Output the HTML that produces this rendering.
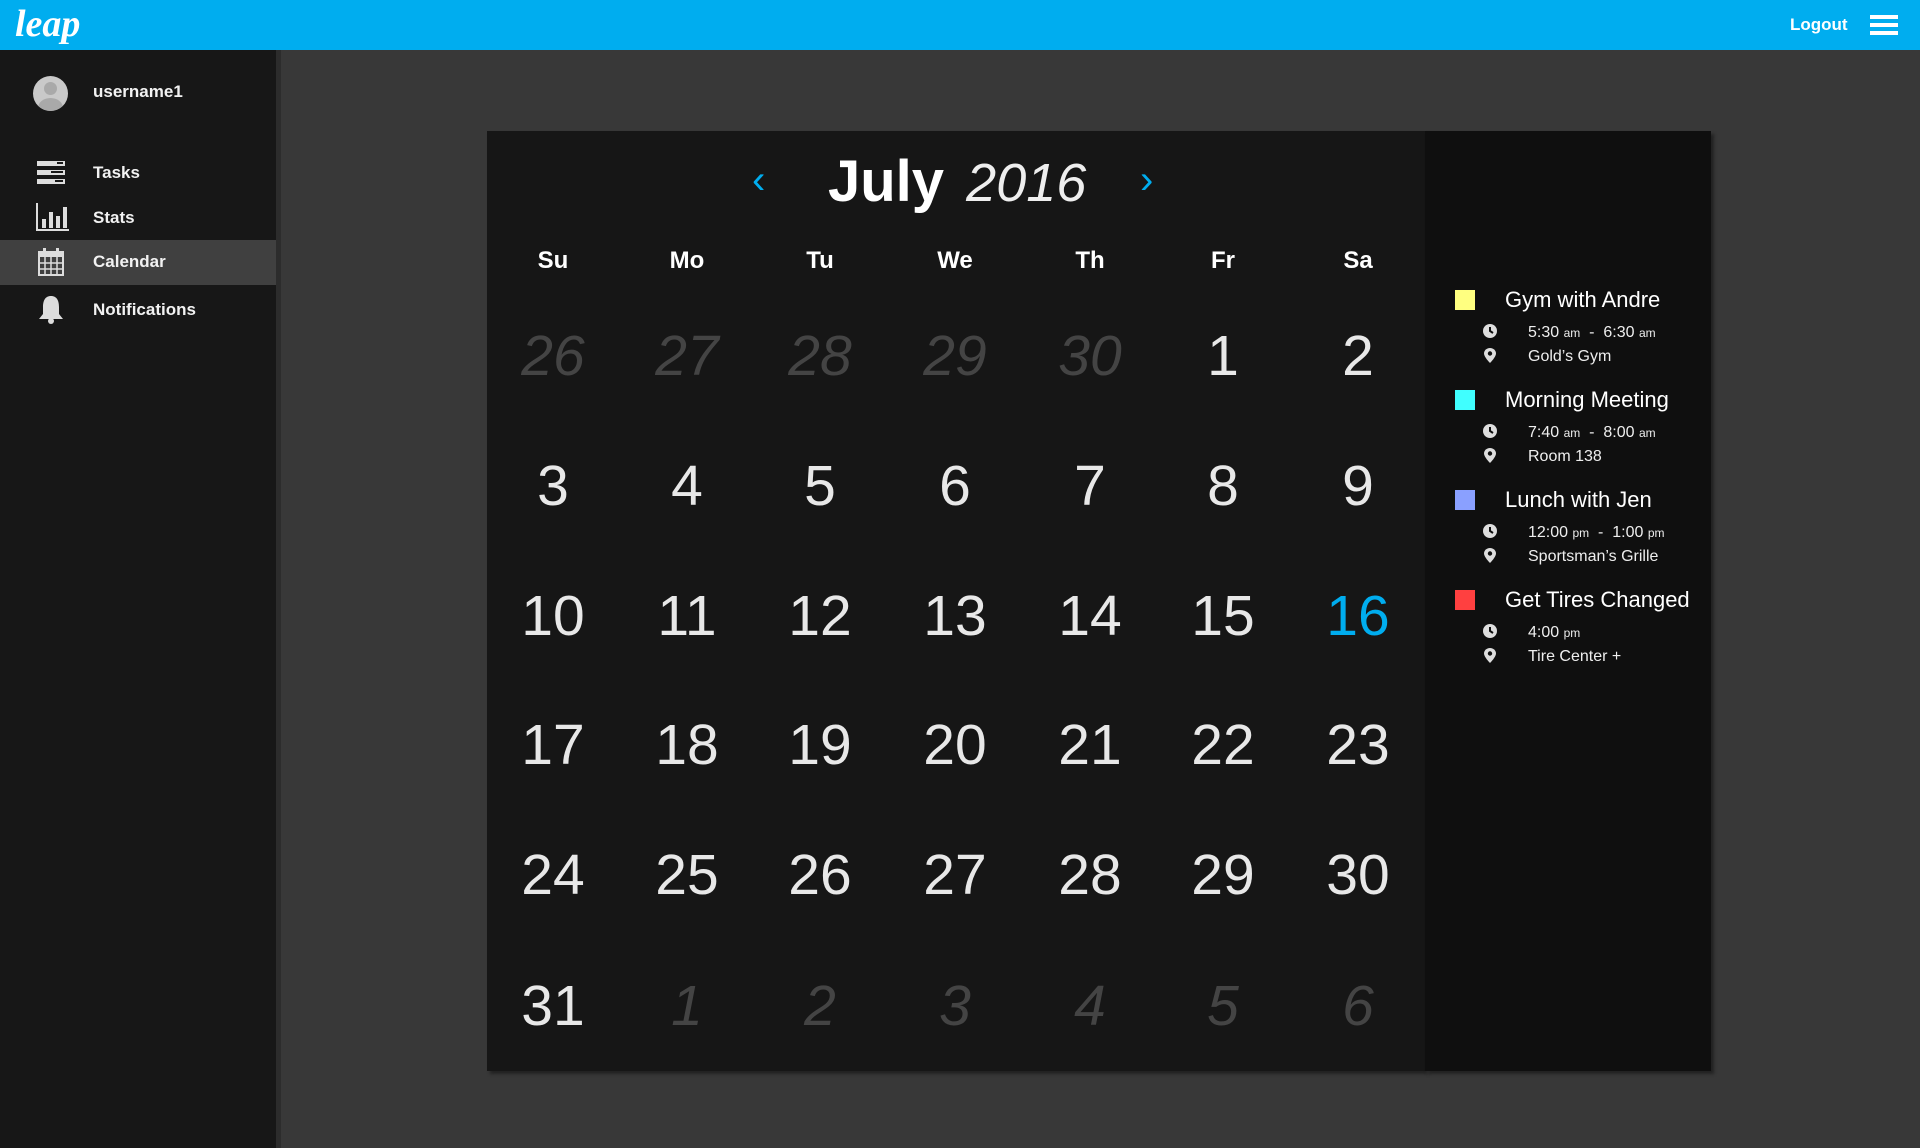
<!DOCTYPE html>
<html><head><style>
*{margin:0;padding:0;box-sizing:border-box}
body{width:1920px;height:1148px;background:#383838;font-family:"Liberation Sans",sans-serif;color:#fff;position:relative;overflow:hidden}
.hdr{position:absolute;left:0;top:0;width:1920px;height:50px;background:#00adef}
.logo{position:absolute;left:15px;top:2px;font-family:"Liberation Serif",serif;font-style:italic;font-weight:bold;font-size:38px;color:#fff}
.logout{position:absolute;left:1790px;top:15px;font-size:17px;font-weight:bold}
.burger{position:absolute;left:1870px;top:15px;width:28px}
.burger div{height:4px;background:#fff;margin-bottom:4px}
.side{position:absolute;left:0;top:50px;width:276px;height:1098px;background:#171717}
.strip{position:absolute;left:276px;top:50px;width:5px;height:1098px;background:#2c2c2c}
.av{position:absolute;left:33px;top:76px;width:35px;height:35px;border-radius:50%;background:#c9c9c9;overflow:hidden}
.av:before{content:"";position:absolute;left:11px;top:6px;width:13px;height:13px;border-radius:50%;background:#a9a9a9}
.av:after{content:"";position:absolute;left:5px;top:22px;width:25px;height:20px;border-radius:50%;background:#a9a9a9}
.nav{position:absolute;left:93px;font-size:17px;font-weight:bold;color:#f2f2f2}
.sel{position:absolute;left:0;top:240px;width:276px;height:45px;background:#404040}
.cal{position:absolute;left:487px;top:131px;width:938px;height:940px;background:#161616;box-shadow:3px 3px 3px #222}
.ev{position:absolute;left:1425px;top:131px;width:286px;height:940px;background:#0f0f0f;box-shadow:3px 3px 3px #222}
.t{position:absolute;text-align:center;width:120px;margin-left:-60px}
.dh{font-size:24px;font-weight:bold;top:247px}
.n{font-size:57px;color:#e8e8e8;line-height:1}
.g{color:#444;font-style:italic}
.sq{position:absolute;left:1455px;width:20px;height:20px}
.et{position:absolute;left:1505px;font-size:22px;color:#fff}
.ei{position:absolute;left:1528px;font-size:16px;color:#eee}
.ei small{font-size:12px}
.ic{position:absolute;left:1483px}
</style></head><body>
<div class="hdr"><div class="logo">leap</div><div class="logout">Logout</div><div class="burger"><div></div><div></div><div></div></div></div>
<div class="side"></div><div class="strip"></div>
<div class="av"></div>
<div class="nav" style="top:82px">username1</div>
<div class="sel"></div>
<svg style="position:absolute;left:37px;top:161px" width="28" height="23"><rect x="0" y="0" width="28" height="5" fill="#ddd"/><rect x="0" y="9" width="28" height="5" fill="#ddd"/><rect x="0" y="18" width="28" height="5" fill="#ddd"/><rect x="20" y="1" width="6" height="2" fill="#171717"/><rect x="14" y="10" width="12" height="2" fill="#171717"/><rect x="18" y="19" width="8" height="2" fill="#171717"/></svg>
<div class="nav" style="top:163px">Tasks</div>
<svg style="position:absolute;left:36px;top:203px" width="33" height="28"><path d="M1 0V27H33" stroke="#ddd" stroke-width="2" fill="none"/><rect x="6" y="16" width="4" height="9" fill="#ddd"/><rect x="13" y="9" width="4" height="16" fill="#ddd"/><rect x="20" y="13" width="4" height="12" fill="#ddd"/><rect x="27" y="4" width="4" height="21" fill="#ddd"/></svg>
<div class="nav" style="top:208px">Stats</div>
<svg style="position:absolute;left:38px;top:248px" width="26" height="28"><rect x="1" y="4" width="24" height="23" fill="none" stroke="#ddd" stroke-width="2"/><rect x="1" y="4" width="24" height="5" fill="#ddd"/><path d="M7 9V27M13 9V27M19 9V27M1 15H25M1 21H25" stroke="#ddd" stroke-width="1.5"/><rect x="5" y="0" width="3" height="7" fill="#ddd"/><rect x="18" y="0" width="3" height="7" fill="#ddd"/></svg>
<div class="nav" style="top:252px">Calendar</div>
<svg style="position:absolute;left:38px;top:295px" width="26" height="30"><path d="M13 1C7 1 5 6 5 12V19L1 24H25L21 19V12C21 6 19 1 13 1Z" fill="#ddd"/><circle cx="13" cy="26" r="3" fill="#ddd"/></svg>
<div class="nav" style="top:300px">Notifications</div>

<div class="cal"></div><div class="ev"></div>
<div style="position:absolute;left:752px;top:158px;font-size:40px;color:#00adef">‹</div>
<div style="position:absolute;left:1140px;top:158px;font-size:40px;color:#00adef">›</div>
<div style="position:absolute;left:828px;top:148px;font-size:58px;font-weight:bold">July <span style="font-weight:normal;font-style:italic;margin-left:6px;font-size:54px;color:#eee">2016</span></div>

<div id="g"></div>
<script>
var xs=[553,687,820,955,1090,1223,1358],ys=[355,485,615,744,874,1005],h=["Su","Mo","Tu","We","Th","Fr","Sa"],s="";
h.forEach(function(d,i){s+='<div class="t dh" style="left:'+xs[i]+'px">'+d+'</div>';});
var nums=[26,27,28,29,30,1,2];for(var d=3;d<=31;d++)nums.push(d);nums=nums.concat([1,2,3,4,5,6]);
nums.forEach(function(n,k){var r=Math.floor(k/7),c=k%7,cls="t n";if(k<5||k>=36)cls+=" g";var st="";if(n==16&&k>5&&k<36)st="color:#00adef;";
s+='<div class="'+cls+'" style="'+st+'left:'+xs[c]+'px;top:'+(ys[r]-27)+'px">'+n+'</div>';});
document.getElementById("g").innerHTML=s;
</script>

<div class="sq" style="top:290px;background:#ffff80"></div><div class="et" style="top:287px">Gym with Andre</div>
<div class="sq" style="top:390px;background:#40ffff"></div><div class="et" style="top:387px">Morning Meeting</div>
<div class="sq" style="top:490px;background:#8aa0ff"></div><div class="et" style="top:487px">Lunch with Jen</div>
<div class="sq" style="top:590px;background:#ff4040"></div><div class="et" style="top:587px">Get Tires Changed</div>

<div class="ei" style="top:324px">5:30 <small>am</small> &nbsp;- &nbsp;6:30 <small>am</small></div>
<div class="ei" style="top:348px">Gold’s Gym</div>
<div class="ei" style="top:424px">7:40 <small>am</small> &nbsp;- &nbsp;8:00 <small>am</small></div>
<div class="ei" style="top:448px">Room 138</div>
<div class="ei" style="top:524px">12:00 <small>pm</small> &nbsp;- &nbsp;1:00 <small>pm</small></div>
<div class="ei" style="top:548px">Sportsman’s Grille</div>
<div class="ei" style="top:624px">4:00 <small>pm</small></div>
<div class="ei" style="top:648px">Tire Center +</div>

<svg width="0" height="0" style="position:absolute"><defs>
<g id="clk"><circle cx="7" cy="7" r="7" fill="#ddd"/><path d="M7 3V7L10 9" stroke="#0f0f0f" stroke-width="2" fill="none"/></g>
<g id="pin"><path d="M6 0C2.5 0 0 2.5 0 5.5C0 9 6 15 6 15S12 9 12 5.5C12 2.5 9.5 0 6 0Z" fill="#ddd"/><circle cx="6" cy="5.5" r="2.2" fill="#0f0f0f"/></g></defs></svg>
<svg class="ic" style="top:324px" width="14" height="14"><use href="#clk"/></svg>
<svg class="ic" style="top:348px;left:1484px" width="12" height="15"><use href="#pin"/></svg>
<svg class="ic" style="top:424px" width="14" height="14"><use href="#clk"/></svg>
<svg class="ic" style="top:448px;left:1484px" width="12" height="15"><use href="#pin"/></svg>
<svg class="ic" style="top:524px" width="14" height="14"><use href="#clk"/></svg>
<svg class="ic" style="top:548px;left:1484px" width="12" height="15"><use href="#pin"/></svg>
<svg class="ic" style="top:624px" width="14" height="14"><use href="#clk"/></svg>
<svg class="ic" style="top:648px;left:1484px" width="12" height="15"><use href="#pin"/></svg>
</body></html>
